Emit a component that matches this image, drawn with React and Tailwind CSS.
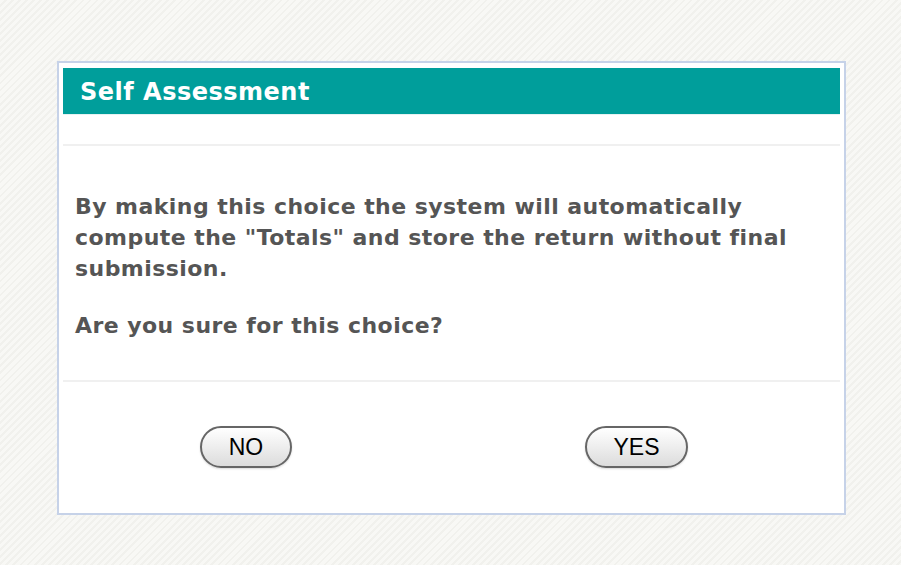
import React from 'react';

const App = () => {
  return (
    <div className="w-[901px] h-[565px] pt-[61px] pl-[57px] bg-[repeating-linear-gradient(135deg,#f8f8f5_0px,#f8f8f5_3px,#f1f1ed_3px,#f1f1ed_5px)] font-['DejaVu_Sans',sans-serif]">
      <div className="w-[789px] h-[454px] border-2 border-[#c6d2e8] bg-white p-1 flex flex-col">
        {/* header */}
        <div className="h-[47px] mt-[1px] bg-[#009e9b] flex items-center pl-[17px] border-b border-[#e6f2f2]">
          <h1 className="text-white text-[24px] tracking-[0.5px] font-bold leading-none pt-[2px]">Self Assessment</h1>
        </div>
        <div className="h-[31px] border-b-2 border-[#f0f0f0]" />

        {/* message */}
        <div className="pl-3 pr-3 pt-[45px] h-[236px] border-b-2 border-[#f0f0f0] text-[#555555] font-bold text-[22px] tracking-[0.45px] leading-[31px]">
          <p>By making this choice the system will automatically compute the "Totals" and store the return without final submission.</p>
          <p className="mt-[26px]">Are you sure for this choice?</p>
        </div>

        {/* buttons */}
        <div className="flex pt-[44px] pl-[137px] gap-[293px]">
          <button className="w-[92px] h-[42px] rounded-full border-2 border-[#666666] bg-[linear-gradient(#ffffff,#dcdcdc)] text-black text-[23px] font-['Liberation_Sans',sans-serif] shadow-[0_1px_2px_rgba(0,0,0,0.15)]">
            NO
          </button>
          <button className="w-[103px] h-[42px] rounded-full border-2 border-[#666666] bg-[linear-gradient(#ffffff,#dcdcdc)] text-black text-[23px] font-['Liberation_Sans',sans-serif] shadow-[0_1px_2px_rgba(0,0,0,0.15)]">
            YES
          </button>
        </div>
      </div>
    </div>
  );
};

export default App;
